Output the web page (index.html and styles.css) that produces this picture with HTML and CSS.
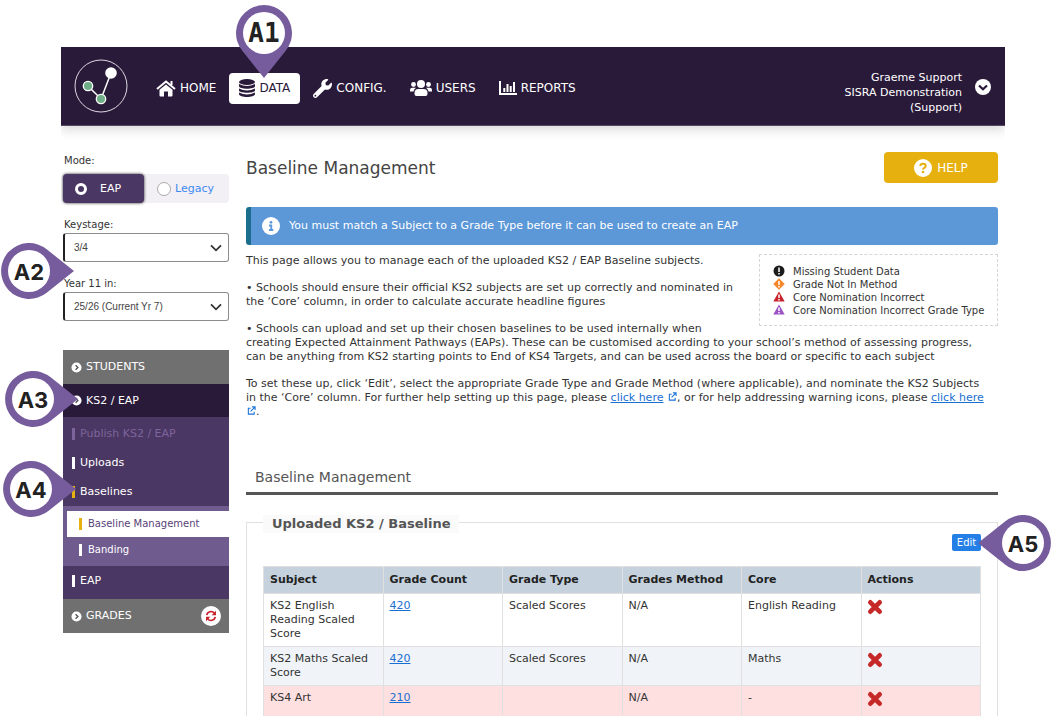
FILE: index.html
```html
<!DOCTYPE html>
<html lang="en">
<head>
<meta charset="utf-8">
<title>Baseline Management</title>
<link rel="stylesheet" href="styles.css">
</head>
<body>
<svg class="defs" aria-hidden="true">
  <symbol id="i-arrow" viewBox="0 0 12 12"><circle cx="6" cy="6" r="5.500" fill="#fff"/><path d="M5 3.500 7.500 6 5 8.500" fill="none" stroke="#555" stroke-width="1.500"/></symbol>
  <symbol id="i-down" viewBox="0 0 12 8"><path d="M1 1.300 6 6.300 11 1.300" fill="none" stroke="#333" stroke-width="1.800"/></symbol>
  <symbol id="i-x" viewBox="0 0 16 16"><path d="M3.300 3.300 12.700 12.700M12.700 3.300 3.300 12.700" stroke="#c62828" stroke-width="4.600" stroke-linecap="round"/></symbol>
  <symbol id="i-ext" viewBox="0 0 10 10"><path d="M4 2.500H1.500V9H8V6.500M4 6 8.500 1.500M5.500 1H9V4.500" fill="none" stroke="#1a73d9" stroke-width="1.200"/></symbol>
  <symbol id="i-tri" viewBox="0 0 12 12"><path d="M6 .5 11.700 10.500H.3Z" fill="currentColor"/><path d="M6 3.500V7M6 8V9.500" stroke="#fff" stroke-width="1.500"/></symbol>
</svg>

<div class="app">
  <header class="topbar">
    <svg class="logo" viewBox="0 0 54 54" role="img" aria-label="SISRA"><circle cx="27" cy="27" r="26" fill="none" stroke="#ddd8e2" stroke-width="1"/><path d="M14 27 27 40 37 14" fill="none" stroke="#fff" stroke-width="1.500"/><circle cx="37" cy="14" r="5.800" fill="#fff"/><circle cx="14" cy="27" r="4.700" fill="#6fae87" stroke="#fff" stroke-width="1.300"/><circle cx="27" cy="40" r="4.700" fill="#6fae87" stroke="#fff" stroke-width="1.300"/></svg>
    <nav class="nav">
      <a href="#"><svg width="20" height="17" viewBox="0 0 20 17"><path d="M10 4.500 3.500 9.800V15.500Q3.500 16.500 4.500 16.500H8V11.500H12V16.500H15.500Q16.500 16.500 16.500 15.500V9.800Z" fill="#fff"/><path d="M1 9 10 1.500 19 9M15.500 1V5" fill="none" stroke="#fff" stroke-width="2"/></svg>HOME</a>
      <a href="#" class="current"><svg width="16" height="18" viewBox="0 0 16 18"><g fill="#2a1a3a"><ellipse cx="8" cy="3" rx="8" ry="3"/><path d="M0 5Q8 9.200 16 5V7.200C16 10.500 0 10.500 0 7.200ZM0 9.500Q8 13.700 16 9.500V11.500C16 14.500 0 14.500 0 11.500ZM0 13.500Q8 17.500 16 13.500V15C16 19 0 19 0 15Z"/></g></svg>DATA</a>
      <a href="#"><svg width="19" height="19" viewBox="0 0 512 512"><path fill="#fff" d="M507.700 109.100c-2.200-9-13.500-12.100-20.100-5.500l-74.400 74.400-67.900-11.300L334 98.900l74.400-74.400c6.600-6.600 3.400-17.900-5.700-20.200-47.400-11.700-99.600.9-136.600 37.900-39.600 39.600-50.500 97.100-34.100 147.200L18.700 402.800c-25 25-25 65.500 0 90.500s65.500 25 90.500 0l213.200-213.200c50.100 16.700 107.500 5.700 147.400-34.200 37.100-37.100 49.700-89.300 37.900-136.800zM64 472a24 24 0 1 1 0-48 24 24 0 0 1 0 48z"/></svg>CONFIG.</a>
      <a href="#"><svg width="22" height="16" viewBox="0 0 22 16"><g fill="#fff"><circle cx="11" cy="4" r="4"/><circle cx="3.500" cy="4.500" r="2.400"/><circle cx="18.500" cy="4.500" r="2.400"/><path d="M4.500 14V13Q4.500 9 8.500 9H13.500Q17.500 9 17.500 13V14Q17.500 16 15.500 16H6.500Q4.500 16 4.500 14ZM0 11.500V10Q0 7.800 2.200 7.800H6Q3.800 9.300 3.500 11.500ZM22 11.500V10Q22 7.800 19.800 7.800H16Q18.200 9.300 18.500 11.500Z"/></g></svg>USERS</a>
      <a href="#"><svg width="18" height="14" viewBox="0 0 18 14"><path d="M1 0V13H18M5.300 7V11M8.500 3V11M11.700 5V11M15 1V11" fill="none" stroke="#fff" stroke-width="2"/></svg>REPORTS</a>
    </nav>
    <div class="account">
      <p>Graeme Support<br>SISRA Demonstration<br>(Support)</p>
      <button type="button" aria-label="Account menu"><svg width="16" height="16" viewBox="0 0 16 16"><circle cx="8" cy="8" r="8" fill="#fff"/><path d="M4 6.500 8 10.300 12 6.500" fill="none" stroke="#2a1a3a" stroke-width="2.200"/></svg></button>
    </div>
  </header>

  <div class="columns">
    <aside class="side">
      <fieldset class="mode">
        <legend>Mode:</legend>
        <div class="switch">
          <label class="on"><input type="radio" name="mode" checked>EAP</label>
          <label><input type="radio" name="mode">Legacy</label>
        </div>
      </fieldset>
      <label class="caption" for="keystage">Keystage:</label>
      <div class="pick"><select id="keystage"><option>3/4</option></select><svg><use href="#i-down"/></svg></div>
      <label class="caption" for="year">Year 11 in:</label>
      <div class="pick"><select id="year"><option>25/26 (Current Yr 7)</option></select><svg><use href="#i-down"/></svg></div>

      <nav class="menu">
        <a href="#" class="top"><svg><use href="#i-arrow"/></svg>STUDENTS</a>
        <a href="#" class="top open"><svg><use href="#i-arrow"/></svg>KS2 / EAP</a>
        <div class="group first">
          <a href="#" class="muted">Publish KS2 / EAP</a>
          <a href="#">Uploads</a>
          <a href="#" class="active">Baselines</a>
        </div>
        <div class="sub">
          <a href="#" class="selected">Baseline Management</a>
          <a href="#">Banding</a>
        </div>
        <div class="group"><a href="#">EAP</a></div>
        <a href="#" class="top"><svg><use href="#i-arrow"/></svg>GRADES
          <span class="refresh"><svg viewBox="0 0 14 14"><path d="M2 6A5 5 0 0 1 11 4M12 8A5 5 0 0 1 3 10" fill="none" stroke="#c9202b" stroke-width="1.800"/><path d="M12.800 1V6H7.800ZM1.200 13V8H6.200Z" fill="#c9202b"/></svg></span></a>
      </nav>
    </aside>

    <main class="main">
      <div class="title">
        <h1>Baseline Management</h1>
        <button type="button" class="help"><svg width="18" height="18" viewBox="0 0 18 18"><circle cx="9" cy="9" r="9" fill="#fff"/><path d="M6.300 7C6.500 4 11.700 4 11.700 7 11.700 8.800 9 8.800 9 10.500" fill="none" stroke="#e6b00e" stroke-width="2"/><circle cx="9" cy="13" r="1.300" fill="#e6b00e"/></svg>HELP</button>
      </div>
      <div class="notice"><svg width="18" height="18" viewBox="0 0 18 18"><circle cx="9" cy="9" r="9" fill="#fff"/><circle cx="9" cy="5.300" r="1.400" fill="#5c97d8"/><path d="M7 8.500H9.300V12.500M7 13H11.300" fill="none" stroke="#5c97d8" stroke-width="1.800"/></svg>You must match a Subject to a Grade Type before it can be used to create an EAP</div>

      <div class="intro">
        <ul class="key">
          <li><svg viewBox="0 0 12 12"><circle cx="6" cy="6" r="5.500" fill="#1c1c1c"/><path d="M6 2.500V7M6 8V9.500" stroke="#fff" stroke-width="1.500"/></svg>Missing Student Data</li>
          <li><svg viewBox="0 0 12 12"><path d="M6 .3 11.700 6 6 11.700 .3 6Z" fill="#f5862a"/><path d="M6 3V7M6 8V9.500" stroke="#fff" stroke-width="1.500"/></svg>Grade Not In Method</li>
          <li><svg class="red"><use href="#i-tri"/></svg>Core Nomination Incorrect</li>
          <li><svg class="violet"><use href="#i-tri"/></svg>Core Nomination Incorrect Grade Type</li>
        </ul>
        <p>This page allows you to manage each of the uploaded KS2 / EAP Baseline subjects.</p>
        <p>• Schools should ensure their official KS2 subjects are set up correctly and nominated in the ‘Core’ column, in order to calculate accurate headline figures</p>
        <p>• Schools can upload and set up their chosen baselines to be used internally when creating Expected Attainment Pathways (EAPs). These can be customised according to your school’s method of assessing progress, can be anything from KS2 starting points to End of KS4 Targets, and can be used across the board or specific to each subject</p>
        <p>To set these up, click ‘Edit’, select the appropriate Grade Type and Grade Method (where applicable), and nominate the KS2 Subjects in the ‘Core’ column. For further help setting up this page, please <a href="#">click here</a> <svg><use href="#i-ext"/></svg>, or for help addressing warning icons, please <a href="#">click here</a> <svg><use href="#i-ext"/></svg>.</p>
      </div>

      <h2>Baseline Management</h2>
      <section class="panel">
        <h3>Uploaded KS2 / Baseline</h3>
        <div class="tools"><button type="button" class="edit">Edit</button></div>
        <table>
          <thead><tr><th>Subject</th><th>Grade Count</th><th>Grade Type</th><th>Grades Method</th><th>Core</th><th>Actions</th></tr></thead>
          <tbody>
            <tr><td>KS2 English Reading Scaled Score</td><td><a href="#">420</a></td><td>Scaled Scores</td><td>N/A</td><td>English Reading</td><td><button type="button" class="remove" aria-label="Remove"><svg><use href="#i-x"/></svg></button></td></tr>
            <tr class="alt"><td>KS2 Maths Scaled Score</td><td><a href="#">420</a></td><td>Scaled Scores</td><td>N/A</td><td>Maths</td><td><button type="button" class="remove" aria-label="Remove"><svg><use href="#i-x"/></svg></button></td></tr>
            <tr class="warn"><td>KS4 Art</td><td><a href="#">210</a></td><td></td><td>N/A</td><td>-</td><td><button type="button" class="remove" aria-label="Remove"><svg><use href="#i-x"/></svg></button></td></tr>
          </tbody>
        </table>
      </section>
    </main>
  </div>
</div>

<div class="pin down a1"><svg viewBox="0 0 56 74"><path d="M28 73 6.500 46A28 28 0 1 1 49.500 46Z"/><circle cx="28" cy="28" r="21"/></svg><span>A1</span></div>
<div class="pin right a2"><svg viewBox="0 0 74 56"><path d="M73 28 46 49.500A28 28 0 1 1 46 6.500Z"/><circle cx="28" cy="28" r="21"/></svg><span>A2</span></div>
<div class="pin right a3"><svg viewBox="0 0 74 56"><path d="M73 28 46 49.500A28 28 0 1 1 46 6.500Z"/><circle cx="28" cy="28" r="21"/></svg><span>A3</span></div>
<div class="pin right a4"><svg viewBox="0 0 74 56"><path d="M73 28 46 49.500A28 28 0 1 1 46 6.500Z"/><circle cx="28" cy="28" r="21"/></svg><span>A4</span></div>
<div class="pin left a5"><svg viewBox="0 0 74 56"><path d="M1 28 28 49.500A28 28 0 1 0 28 6.500Z"/><circle cx="46" cy="28" r="21"/></svg><span>A5</span></div>
</body>
</html>
```
FILE: styles.css
```css
* { box-sizing: border-box; }
body {
  margin: 0;
  padding: 47px 53px 11px 61px;
  height: 100vh;
  position: relative;
  overflow: hidden;
  background: #fff;
  color: #333;
  font: 11px/14px Verdana, "DejaVu Sans", sans-serif;
}
h1, h2, h3, p, ul { margin: 0; padding: 0; font-weight: normal; }
a { color: #1a6fd0; }
button { font: inherit; border: 0; padding: 0; cursor: pointer; }
svg { flex: none; }
.defs { position: absolute; width: 0; height: 0; }

.app { height: 100%; overflow: hidden; }

.topbar {
  display: flex;
  align-items: center;
  height: 79px;
  padding: 0 14px 0 13px;
  background: #2a1a3a;
  border-bottom: 1px solid #554a63;
  box-shadow: 0 4px 10px rgba(0, 0, 0, .15);
}
.logo { width: 54px; height: 54px; }
.nav { display: flex; gap: 3px; margin: 4px 0 0 18px; font-size: 12px; }
.nav a {
  display: flex;
  align-items: center;
  gap: 4px;
  height: 31px;
  padding: 0 10px;
  border-radius: 4px;
  color: #fff;
  text-decoration: none;
}
.nav .current { background: #fff; color: #2a1a3a; }
.account {
  display: flex;
  align-items: center;
  gap: 13px;
  margin: 13px 0 0 auto;
  color: #fff;
  line-height: 15px;
  text-align: right;
}
.account button { height: 16px; margin-bottom: 11px; background: none; }

.columns { display: flex; gap: 17px; padding: 26px 7px 0 2px; }
.side { flex: none; width: 166px; font-size: 10px; }
.mode { margin: 0; padding: 0; border: 0; }
.mode legend { padding: 2px 1px 6px; }
.switch { display: flex; height: 29px; background: #f2eff5; border-radius: 4px; }
.switch label {
  display: flex;
  flex: 1;
  align-items: center;
  gap: 4px;
  padding-left: 13px;
  color: #3d8bf2;
  font-size: 11px;
}
.switch .on {
  flex: none;
  width: 81px;
  gap: 13px;
  padding-left: 12px;
  background: #4b3763;
  border-radius: 4px;
  box-shadow: 0 0 3px #222;
  color: #fff;
}
.switch input {
  appearance: none;
  width: 14px;
  height: 14px;
  margin: 0;
  border: 1px solid #aaa;
  border-radius: 50%;
  background: #fff;
}
.switch .on input { width: 12px; height: 12px; border: 3px solid #fff; background: #4b3763; }
.caption { display: block; padding: 15px 1px 1px; }
.pick { position: relative; }
.pick select {
  appearance: none;
  display: block;
  width: 100%;
  height: 29px;
  padding: 0 9px;
  border: 1px solid #8c8c8c;
  border-left: 2px solid #222;
  border-radius: 3px;
  background: #fff;
  color: #444;
  font: 10px "Liberation Sans", Arial, sans-serif;
}
.pick svg { position: absolute; right: 7px; top: 11px; width: 12px; height: 8px; pointer-events: none; }

.menu { margin-top: 29px; font-size: 11px; color: #fff; }
.menu a { display: flex; align-items: center; color: #fff; text-decoration: none; }
.menu .top { height: 34px; padding: 0 8px; gap: 4px; background: #707070; }
.menu .top svg { width: 11px; height: 11px; }
.menu .top.open { height: 33px; background: #2a1a3a; }
.group { padding: 0 0 4px; background: #4b3763; }
.group.first { padding: 2px 0 0; }
.group a { height: 29px; padding-left: 9px; }
.menu .group a::before, .menu .sub a::before {
  content: "";
  width: 3px;
  height: 12px;
  margin-right: 5px;
  background: currentColor;
}
.menu .group .muted { color: #7d649b; }
.menu .group .active::before, .menu .sub .selected::before { background: #e6b00e; }
.sub { padding: 5px 0 3px 4px; background: #705b8f; font-size: 10px; }
.sub a { height: 26px; padding-left: 12px; }
.menu .sub a::before { margin-right: 6px; }
.menu .sub .selected { background: #fff; color: #594277; }
.menu .top .refresh {
  display: grid;
  place-items: center;
  width: 20px;
  height: 20px;
  margin-left: auto;
  border-radius: 50%;
  background: #fff;
}
.menu .refresh svg { width: 12px; height: 12px; }

.main { flex: 1; min-width: 0; }
.title { display: flex; align-items: center; justify-content: space-between; }
h1 { color: #444; font-size: 17px; line-height: 22px; }
.help {
  display: flex;
  align-items: center;
  justify-content: center;
  gap: 5px;
  width: 114px;
  height: 31px;
  border-radius: 4px;
  background: #e6b00e;
  color: #fff;
  font-size: 12px;
}
.notice {
  display: flex;
  align-items: center;
  gap: 9px;
  min-height: 38px;
  margin-top: 24px;
  padding: 0 11px;
  border-left: 5px solid #1c6f8c;
  border-radius: 3px;
  background: #5c97d8;
  color: #fff;
}
.intro { margin-top: 9px; }
.intro p { padding-right: 10px; }
.intro p + p { margin-top: 13px; }
.intro p svg { width: 9px; height: 9px; margin-left: 1px; }
.key {
  float: right;
  width: 239px;
  margin-left: 16px;
  padding: 10px 5px 8px 13px;
  border: 1px dashed #d5d5d5;
  list-style: none;
  font-size: 10px;
  line-height: 13px;
}
.key li { display: flex; gap: 8px; white-space: nowrap; }
.key svg { width: 12px; height: 12px; }
.red { color: #c8232c; }
.violet { color: #9a52c4; }

h2 {
  margin-top: 49px;
  padding: 0 9px 6px;
  border-bottom: 3px solid #555;
  color: #555;
  font-size: 14px;
  line-height: 18px;
}
.panel { margin-top: 27px; padding: 0 16px 16px; border: 1px solid #e0e0e0; }
.panel h3 {
  width: fit-content;
  margin-top: -8px;
  padding: 0 9px;
  background: #fafafa;
  color: #555;
  font-size: 13px;
  font-weight: bold;
  line-height: 18px;
}
.tools { display: flex; justify-content: flex-end; margin: 1px 0 15px; }
.edit { width: 29px; height: 17px; border-radius: 2px; background: #2480e6; color: #fff; font-size: 10px; }
table { width: 100%; table-layout: fixed; border-collapse: collapse; }
th, td { padding: 5px 6px; border: 1px solid #e0e0e0; text-align: left; vertical-align: top; }
th { padding: 6px; background: #c5d2de; color: #222; }
.alt { background: #f0f4f8; }
.warn { background: #ffe0e0; }
.warn td { height: 52px; }
.remove { display: block; height: 14px; background: none; }
.remove svg { display: block; width: 16px; height: 16px; margin-left: -1px; }

.pin { position: absolute; display: grid; font: bold 22px/58px Inter, "Liberation Sans", sans-serif; color: #222; text-align: center; pointer-events: none; }
.pin svg, .pin span { grid-area: 1 / 1; }
.pin svg { width: 74px; height: 56px; }
.pin span { width: 56px; height: 56px; }
.pin path { fill: #765c9c; }
.pin circle { fill: #fff; }
.pin.down { font: bold 26px/56px "DejaVu Sans Mono", monospace; }
.pin.down svg { width: 56px; height: 74px; }
.pin.left span { justify-self: end; }
.a1 { left: 236px; top: 5px; }
.a2 { left: 1px; top: 243px; }
.a3 { left: 5px; top: 371px; }
.a4 { left: 3px; top: 461px; }
.a5 { left: 977px; top: 515px; }
```
